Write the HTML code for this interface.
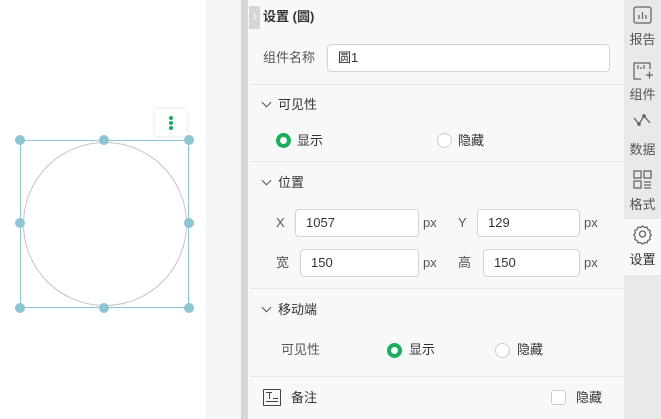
<!DOCTYPE html>
<html><head><meta charset="utf-8"><style>
*{margin:0;padding:0;box-sizing:border-box}
body{width:661px;height:419px;overflow:hidden;position:relative;background:#fff;font-family:"Liberation Sans","Noto Sans CJK SC",sans-serif;font-size:13px;color:#333}
.a{position:absolute}
.inp{position:absolute;background:#fff;border:1px solid #d0d3d8;border-radius:4px;height:28px;line-height:26px;padding-left:10px;font-size:13px;color:#333}
.hr{position:absolute;left:249px;width:375px;height:1px;background:#e6e8eb}
.rad{position:absolute;width:15px;height:15px;border-radius:50%;border:1px solid #ccc;background:#fff}
.rad.on{border:4px solid #1aad5a}
.t{position:absolute;white-space:nowrap;line-height:16px}
.side{position:absolute;left:624px;width:37px;text-align:center;font-size:13px;color:#555;line-height:16px}
.chev{position:absolute;width:7px;height:7px;border-right:1.3px solid #555;border-bottom:1.3px solid #555;transform:rotate(45deg)}
</style></head><body>
<div class="a" style="left:206px;top:0;width:35px;height:419px;background:#f4f5f7"></div>
<div class="a" style="left:241px;top:0;width:7px;height:419px;background:#d6d6d6"></div>
<div class="a" style="left:248px;top:0;width:376px;height:419px;background:#f7f8fa"></div>
<div class="a" style="left:624px;top:0;width:37px;height:419px;background:#e8e9eb"></div>
<div class="a" style="left:624px;top:219px;width:37px;height:56px;background:#f7f8fa"></div>

<div class="a" style="left:155px;top:109px;width:32px;height:27px;background:#fff;border-radius:3px;box-shadow:0 0 4px rgba(0,0,0,.12)"></div>
<div class="a" style="left:169px;top:116px;width:4px;height:4px;border-radius:50%;background:#1aad5a;box-shadow:0 5px 0 #1aad5a,0 10px 0 #1aad5a"></div>
<div class="a" style="left:20px;top:140px;width:169px;height:168px;border:1px solid #8ec5d3"></div>
<div class="a" style="left:23px;top:142px;width:164px;height:164px;border:1px solid #c3c3c3;border-radius:50%"></div>
<svg class="a" style="left:0;top:0" width="206" height="330">
<g fill="#8ec5d3"><circle cx="20" cy="140" r="5"/><circle cx="104" cy="140" r="5"/><circle cx="189" cy="140" r="5"/><circle cx="20" cy="223" r="5"/><circle cx="189" cy="223" r="5"/><circle cx="20" cy="308" r="5"/><circle cx="104" cy="308" r="5"/><circle cx="189" cy="308" r="5"/></g></svg>

<div class="a" style="left:249px;top:6px;width:11px;height:23px;background:#d6d6d6"></div>
<div class="a" style="left:251px;top:14px;width:5px;height:5px;border-right:1.3px solid #fff;border-top:1.3px solid #fff;transform:rotate(45deg)"></div>
<div class="t" style="left:263px;top:9px;font-weight:bold;font-size:13px">设置 (圆)</div>
<div class="t" style="left:263px;top:50px;color:#555">组件名称</div>
<div class="inp" style="left:327px;top:44px;width:283px">圆1</div>
<div class="hr" style="top:84px"></div>

<div class="chev" style="left:263px;top:99px"></div>
<div class="t" style="left:278px;top:97px">可见性</div>
<div class="rad on" style="left:276px;top:133px"></div>
<div class="t" style="left:297px;top:133px">显示</div>
<div class="rad" style="left:437px;top:133px"></div>
<div class="t" style="left:458px;top:133px">隐藏</div>
<div class="hr" style="top:161px"></div>

<div class="chev" style="left:263px;top:177px"></div>
<div class="t" style="left:278px;top:175px">位置</div>
<div class="t" style="left:276px;top:215px;color:#555">X</div>
<div class="inp" style="left:295px;top:209px;width:124px">1057</div>
<div class="t" style="left:423px;top:215px;color:#555">px</div>
<div class="t" style="left:458px;top:215px;color:#555">Y</div>
<div class="inp" style="left:477px;top:209px;width:103px">129</div>
<div class="t" style="left:584px;top:215px;color:#555">px</div>
<div class="t" style="left:276px;top:255px;color:#555">宽</div>
<div class="inp" style="left:300px;top:249px;width:119px">150</div>
<div class="t" style="left:423px;top:255px;color:#555">px</div>
<div class="t" style="left:458px;top:255px;color:#555">高</div>
<div class="inp" style="left:483px;top:249px;width:97px">150</div>
<div class="t" style="left:584px;top:255px;color:#555">px</div>
<div class="hr" style="top:288px"></div>

<div class="chev" style="left:263px;top:304px"></div>
<div class="t" style="left:278px;top:302px">移动端</div>
<div class="t" style="left:281px;top:342px;color:#555">可见性</div>
<div class="rad on" style="left:387px;top:343px"></div>
<div class="t" style="left:409px;top:342px">显示</div>
<div class="rad" style="left:495px;top:343px"></div>
<div class="t" style="left:517px;top:342px">隐藏</div>
<div class="hr" style="top:376px"></div>

<div class="a" style="left:263px;top:389px;width:18px;height:17px;border:1.3px solid #444;border-radius:1px"></div>
<div class="a" style="left:266px;top:392px;width:6px;height:1.3px;background:#444"></div>
<div class="a" style="left:268.5px;top:392px;width:1.3px;height:7px;background:#444"></div>
<div class="a" style="left:266px;top:401px;width:12px;height:1.3px;background:#444"></div>
<div class="a" style="left:273px;top:398px;width:5px;height:1.3px;background:#444"></div>
<div class="t" style="left:291px;top:390px">备注</div>
<div class="a" style="left:551px;top:390px;width:15px;height:15px;border:1px solid #ccc;border-radius:3px;background:#fff"></div>
<div class="t" style="left:576px;top:390px">隐藏</div>

<svg class="a" style="left:624px;top:0" width="37" height="250" fill="none" stroke="#666" stroke-width="1.3">
<rect x="10" y="7" width="17" height="16" rx="2"/><path d="M15 19v-4M18.5 19v-7M22 19v-4"/>
<path d="M26 69V63H10v16h7"/><path d="M14 69v-4M17 69v-2M20 69v-4M22 75h7M25.5 71.5v7"/>
<path d="M10 118l5 6 5-8 6 7"/><circle cx="15" cy="124" r="1.2" fill="#666"/><circle cx="20" cy="116" r="1.2" fill="#666"/>
<rect x="10" y="171" width="7" height="7"/><rect x="20" y="171" width="7" height="7"/><rect x="10" y="181" width="7" height="7"/><path d="M20 182h7M20 185h7M20 188h7"/>
<circle cx="18.5" cy="234" r="3"/><path d="M18.5 226l2 1.5 2.4-.4 1 2.3 2.2 1.1-.4 2.5 1.5 2-1.5 2 .4 2.5-2.2 1.1-1 2.3-2.4-.4-2 1.5-2-1.5-2.4.4-1-2.3-2.2-1.1.4-2.5-1.5-2 1.5-2-.4-2.5 2.2-1.1 1-2.3 2.4.4z"/>
</svg>
<div class="side" style="top:32px">报告</div>
<div class="side" style="top:87px">组件</div>
<div class="side" style="top:142px">数据</div>
<div class="side" style="top:197px">格式</div>
<div class="side" style="top:252px;color:#333">设置</div>
</body></html>
